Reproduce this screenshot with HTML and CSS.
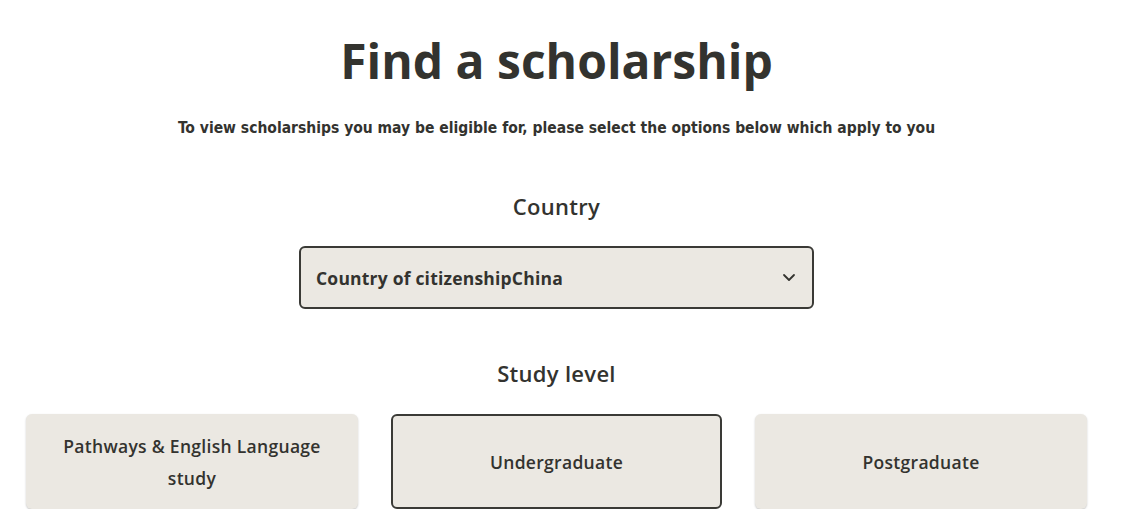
FILE: index.html
```html
<!DOCTYPE html>
<html lang="en">
<head>
<meta charset="utf-8">
<title>Find a scholarship</title>
<link rel="stylesheet" href="styles.css">
</head>
<body>
<main class="finder">
  <h1 class="title">Find a scholarship</h1>
  <p class="intro">To view scholarships you may be eligible for, please select the options below which apply to you</p>

  <section class="group">
    <h2 class="group-title">Country</h2>
    <div class="select">
      <span class="select-text">Country of citizenshipChina</span>
      <svg class="chevron" width="14" height="9" viewBox="0 0 14 9" aria-hidden="true"><path d="M2 2l5 5 5-5" fill="none" stroke="#33332f" stroke-width="1.8" stroke-linecap="round" stroke-linejoin="round"/></svg>
    </div>
  </section>

  <section class="group levels">
    <h2 class="group-title">Study level</h2>
    <div class="cards">
      <button class="card">Pathways &amp; English Language study</button>
      <button class="card card-selected">Undergraduate</button>
      <button class="card">Postgraduate</button>
    </div>
  </section>
</main>
</body>
</html>
```

FILE: styles.css
```css
html, body {
  margin: 0;
  padding: 0;
  background: #ffffff;
}

body {
  color: #33332f;
  font-family: "Open Sans", "Noto Sans", sans-serif;
}

.finder {
  padding: 0 42px 0 26px;
  display: flex;
  flex-direction: column;
  align-items: center;
}

.title {
  margin: 32px 0 0;
  font-size: 48px;
  line-height: 58px;
  font-weight: 700;
  letter-spacing: 0;
}

.intro {
  margin: 28px 0 0;
  font-family: "DejaVu Sans", sans-serif;
  font-stretch: condensed;
  font-size: 15.5px;
  line-height: 20px;
  font-weight: 700;
}

.group {
  width: 100%;
  display: flex;
  flex-direction: column;
  align-items: center;
}

.group-title {
  margin: 0;
  font-size: 22px;
  line-height: 30px;
  font-weight: 600;
  letter-spacing: 0.3px;
}

.group:first-of-type {
  margin-top: 53px;
}

.select {
  margin-top: 25px;
  box-sizing: border-box;
  width: 515px;
  height: 63px;
  border: 2px solid #3a3a36;
  border-radius: 6px;
  background: #ebe8e2;
  display: flex;
  align-items: center;
  justify-content: space-between;
  padding: 0 16px 0 15px;
}

.select-text {
  font-size: 17.5px;
  font-weight: 700;
  letter-spacing: 0.2px;
}

.chevron {
  display: block;
}

.levels {
  margin-top: 49px;
}

.cards {
  margin-top: 26px;
  width: 100%;
  display: grid;
  grid-template-columns: 332px 331px 332px;
  justify-content: space-between;
}

.card {
  box-sizing: border-box;
  height: 95px;
  border: 0;
  border-radius: 6px;
  background: #ebe8e2;
  box-shadow: 0 1px 2px rgba(0, 0, 0, 0.22);
  font-family: "Open Sans", "Noto Sans", sans-serif;
  font-size: 17.5px;
  line-height: 32px;
  font-weight: 600;
  letter-spacing: 0.3px;
  color: #33332f;
  padding: 0 20px;
  text-align: center;
}

.card-selected {
  border: 2px solid #3a3a36;
  box-shadow: none;
}
```
